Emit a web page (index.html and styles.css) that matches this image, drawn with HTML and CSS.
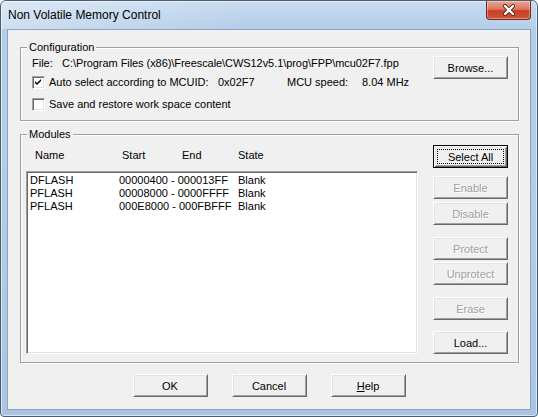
FILE: index.html
```html
<!DOCTYPE html>
<html lang="en">
<head>
    <meta charset="UTF-8">
    <title>Non Volatile Memory Control</title>
    <link rel="stylesheet" href="styles.css">
</head>
<body>
    <div class="window">
        <div class="titlebar">
            <span class="title">Non Volatile Memory Control</span>
            <div class="close-btn">
                <svg width="14" height="12" viewBox="0 0 14 12">
                    <path d="M3 2 L11 10 M11 2 L3 10" stroke="#5a1d14" stroke-width="4" stroke-linecap="round"/>
                    <path d="M3 2 L11 10 M11 2 L3 10" stroke="#ffffff" stroke-width="2.4" stroke-linecap="round"/>
                </svg>
            </div>
        </div>

        <div class="client">
            <fieldset class="group config">
                <legend>Configuration</legend>
                <div class="config-body">
                    <div class="config-left">
                        <div class="file-row">
                            <span class="file-label">File:</span>
                            <span class="file-path">C:\Program Files (x86)\Freescale\CWS12v5.1\prog\FPP\mcu02F7.fpp</span>
                        </div>
                        <div class="check-row first">
                            <span class="checkbox">
                                <svg width="7" height="7" viewBox="0 0 7 7">
                                    <path d="M0 2 L2 4 L6 0 L6 2 L2 6 L0 4 Z" fill="#000"/>
                                </svg>
                            </span>
                            <span class="mcu-label">Auto select according to MCUID:</span>
                            <span class="mcu-id">0x02F7</span>
                            <span class="speed-label">MCU speed:</span>
                            <span>8.04 MHz</span>
                        </div>
                        <div class="check-row second">
                            <span class="checkbox"></span>
                            <span>Save and restore work space content</span>
                        </div>
                    </div>
                    <div class="btn browse">Browse...</div>
                </div>
            </fieldset>

            <fieldset class="group modules">
                <legend>Modules</legend>
                <div class="modules-body">
                    <div class="modules-left">
                        <div class="heads">
                            <span>Name</span>
                            <span>Start</span>
                            <span>End</span>
                            <span>State</span>
                        </div>
                        <div class="listbox">
                            <div class="list-row"><span>DFLASH</span><span>00000400 - 000013FF</span><span>Blank</span></div>
                            <div class="list-row"><span>PFLASH</span><span>00008000 - 0000FFFF</span><span>Blank</span></div>
                            <div class="list-row"><span>PFLASH</span><span>000E8000 - 000FBFFF</span><span>Blank</span></div>
                        </div>
                    </div>
                    <div class="side-buttons">
                        <div class="btn default select-all">Select All</div>
                        <div class="btn disabled gap-md">Enable</div>
                        <div class="btn disabled gap-sm">Disable</div>
                        <div class="btn disabled gap-lg">Protect</div>
                        <div class="btn disabled gap-xs">Unprotect</div>
                        <div class="btn disabled gap-lg">Erase</div>
                        <div class="btn gap-mdl">Load...</div>
                    </div>
                </div>
            </fieldset>

            <div class="dialog-buttons">
                <div class="btn">OK</div>
                <div class="btn">Cancel</div>
                <div class="btn"><u>H</u>elp</div>
            </div>
        </div>
    </div>
</body>
</html>
```

FILE: styles.css
```css
body {
    margin: 0;
    background-color: #ffffff;
    font-family: "Liberation Sans", Arial, sans-serif;
    font-size: 11px;
    color: #000000;
}

.window {
    box-sizing: border-box;
    width: 538px;
    height: 417px;
    display: flex;
    flex-direction: column;
    border: 1px solid #4b5d70;
    border-radius: 6px 6px 4px 4px;
    background: linear-gradient(to bottom, #c8dcf0 0, #b4cde8 28px, #b2cbe6 60%, #aac5e2 100%);
    box-shadow: inset 0 0 0 1px rgba(255, 255, 255, 0.55);
    overflow: hidden;
}

.titlebar {
    height: 28px;
    display: flex;
    justify-content: space-between;
    align-items: flex-start;
    padding-left: 7px;
    background: linear-gradient(to right, rgba(255, 255, 255, 0.35), rgba(255, 255, 255, 0) 45%);
}

.title {
    font-size: 12px;
    line-height: 12px;
    margin-top: 8px;
    color: #000000;
}

.close-btn {
    box-sizing: border-box;
    width: 45px;
    height: 19px;
    margin-right: 6px;
    display: flex;
    align-items: center;
    justify-content: center;
    border: 1px solid #6e2a1e;
    border-top: none;
    border-radius: 0 0 4px 4px;
    background: linear-gradient(to bottom, #eba594 0, #dd7560 45%, #c63d24 55%, #d0553a 100%);
    box-shadow: inset 0 0 0 1px rgba(255, 255, 255, 0.35);
}

.client {
    flex: 1;
    margin: 0 6px 6px 6px;
    border: 1px solid #8ca4bd;
    background-color: #f0f0f0;
    display: flex;
    flex-direction: column;
}

.group {
    box-sizing: border-box;
    margin: 0 11px 0 12px;
    padding: 0;
    min-width: 0;
    border: 1px solid #a0a0a0;
    box-shadow: inset 1px 1px 0 #ffffff, 1px 1px 0 #ffffff;
}

.group legend {
    font-size: 11px;
    line-height: 14px;
    padding: 0 2px;
    margin-left: 6px;
    background-color: #f0f0f0;
}

.config {
    margin-top: 10px;
    height: 81px;
}

.config-body {
    display: flex;
    justify-content: space-between;
    padding: 1px 10px 0 11px;
}

.file-row {
    display: flex;
    margin-top: 2px;
    height: 13px;
    line-height: 13px;
    white-space: nowrap;
}

.file-label {
    width: 30px;
}

.file-path {
    letter-spacing: -0.06px;
}

.check-row {
    display: flex;
    align-items: center;
    height: 13px;
    line-height: 13px;
    white-space: nowrap;
}

.check-row.first {
    margin-top: 6px;
}

.check-row.second {
    margin-top: 9px;
}

.checkbox {
    box-sizing: border-box;
    width: 13px;
    height: 13px;
    margin-right: 4px;
    display: flex;
    align-items: center;
    justify-content: center;
    background-color: #ffffff;
    border: 1px solid;
    border-color: #a0a0a0 #ffffff #ffffff #a0a0a0;
    box-shadow: inset 1px 1px 0 #696969, inset -1px -1px 0 #e3e3e3;
}

.mcu-label {
    width: 169px;
}

.mcu-id {
    width: 69px;
}

.speed-label {
    width: 75px;
}

.btn {
    box-sizing: border-box;
    width: 75px;
    height: 23px;
    display: flex;
    align-items: center;
    justify-content: center;
    background-color: #f0f0f0;
    border: 1px solid;
    border-color: #ffffff #696969 #696969 #ffffff;
    box-shadow: inset 1px 1px 0 #e3e3e3, inset -1px -1px 0 #a0a0a0;
    white-space: nowrap;
}

.btn.default {
    border-color: #000000;
    box-shadow: inset 1px 1px 0 #ffffff, inset -1px -1px 0 #696969, inset 2px 2px 0 #e3e3e3, inset -2px -2px 0 #a0a0a0;
    outline: 1px dotted #000000;
    outline-offset: -5px;
}

.btn.disabled {
    color: #a0a0a0;
    text-shadow: 1px 1px 0 #ffffff;
}

.browse {
    margin-top: 1px;
}

.modules {
    margin-top: 6px;
    height: 236px;
}

.modules-body {
    display: flex;
    justify-content: space-between;
    padding: 0 10px 0 5px;
}

.heads {
    display: grid;
    grid-template-columns: 87px 60px 56px auto;
    padding-left: 9px;
    margin-top: 8px;
    line-height: 13px;
}

.listbox {
    box-sizing: border-box;
    width: 392px;
    height: 183px;
    margin-top: 9px;
    padding: 2px 2px 0 3px;
    background-color: #ffffff;
    border: 1px solid;
    border-color: #a0a0a0 #ffffff #ffffff #a0a0a0;
    box-shadow: inset 1px 1px 0 #696969, inset -1px -1px 0 #e3e3e3;
}

.list-row {
    display: grid;
    grid-template-columns: 89px 119px auto;
    line-height: 13px;
    white-space: nowrap;
}

.side-buttons {
    display: flex;
    flex-direction: column;
}

.select-all {
    margin-top: 4px;
}

.gap-xs {
    margin-top: 2px;
}

.gap-sm {
    margin-top: 3px;
}

.gap-md {
    margin-top: 8px;
}

.gap-mdl {
    margin-top: 11px;
}

.gap-lg {
    margin-top: 12px;
}

.dialog-buttons {
    display: flex;
    justify-content: center;
    gap: 24px;
    margin-top: 11px;
}
```
